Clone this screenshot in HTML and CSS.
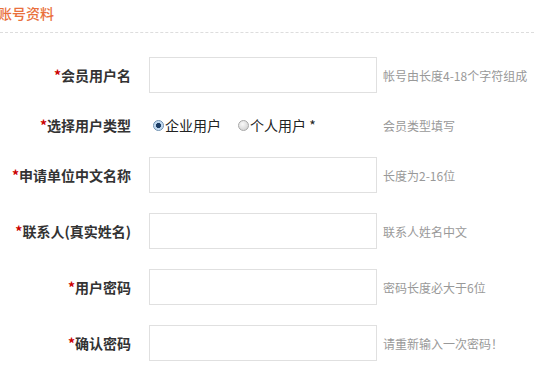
FILE: index.html
```html
<!DOCTYPE html>
<html lang="zh-CN">
<head>
<meta charset="utf-8">
<title>账号资料</title>
<link rel="stylesheet" href="styles.css">
</head>
<body>
<div class="section-head"><span class="section-title">账号资料</span></div>
<form class="form">
  <div class="row">
    <label class="label"><span class="req">*</span>会员用户名</label>
    <input class="field" type="text">
    <span class="hint">帐号由长度4-18个字符组成</span>
  </div>
  <div class="row row-radio">
    <label class="label"><span class="req">*</span>选择用户类型</label>
    <div class="radios">
      <label class="opt"><input type="radio" name="t" class="radio" checked>企业用户</label>
      <label class="opt opt2"><input type="radio" name="t" class="radio">个人用户 *</label>
    </div>
    <span class="hint">会员类型填写</span>
  </div>
  <div class="row">
    <label class="label"><span class="req">*</span>申请单位中文名称</label>
    <input class="field" type="text">
    <span class="hint">长度为2-16位</span>
  </div>
  <div class="row">
    <label class="label"><span class="req">*</span>联系人(真实姓名)</label>
    <input class="field" type="text">
    <span class="hint">联系人姓名中文</span>
  </div>
  <div class="row">
    <label class="label"><span class="req">*</span>用户密码</label>
    <input class="field" type="password">
    <span class="hint">密码长度必大于6位</span>
  </div>
  <div class="row">
    <label class="label"><span class="req">*</span>确认密码</label>
    <input class="field" type="password">
    <span class="hint">请重新输入一次密码！</span>
  </div>
</form>
</body>
</html>
```
FILE: styles.css
```css
html, body {
  margin: 0;
  padding: 0;
  background: #fff;
  font-family: "Noto Sans CJK SC", "Noto Sans", sans-serif;
  overflow: hidden;
}
.section-head {
  padding: 3px 0 9px;
  border-bottom: 1px dashed #dddddd;
  line-height: 20px;
}
.section-title {
  display: block;
  margin-left: -2px;
  font-size: 14px;
  font-weight: 500;
  color: #e9703c;
}
.form {
  display: flex;
  flex-direction: column;
  gap: 20px;
  padding-top: 24px;
}
.row {
  display: grid;
  grid-template-columns: 131px 228px auto;
  column-gap: 18px;
  align-items: center;
  height: 36px;
}
.row-radio {
  height: 24px;
}
.row .hint {
  margin-left: -12px;
}
.label {
  text-align: right;
  font-size: 14px;
  font-weight: bold;
  color: #333;
  white-space: nowrap;
}
.req {
  color: #cc0000;
  font-weight: bold;
}
.field {
  box-sizing: border-box;
  width: 228px;
  height: 36px;
  margin: 0;
  border: 1px solid #e0e0e0;
  background: #fff;
  outline: none;
}
.hint {
  font-size: 12px;
  color: #999;
  white-space: nowrap;
}
.radios {
  display: flex;
  align-items: center;
  font-size: 14px;
  color: #222;
  padding-left: 4px;
}
.opt {
  display: flex;
  align-items: center;
}
.opt2 {
  margin-left: 17px;
}
.radio {
  appearance: none;
  -webkit-appearance: none;
  box-sizing: border-box;
  width: 11px;
  height: 11px;
  margin: 0 1px 0 0;
  border-radius: 50%;
  border: 1px solid #a8a8a8;
  background: radial-gradient(circle at 40% 35%, #fafafa 0, #d4d4d4 80%);
}
.radio:checked {
  border-color: #6c8fb0;
  background: radial-gradient(circle, #1c3c64 0, #1c3c64 35%, #b9d4ee 45%, #e6f0fa 100%);
}
```
